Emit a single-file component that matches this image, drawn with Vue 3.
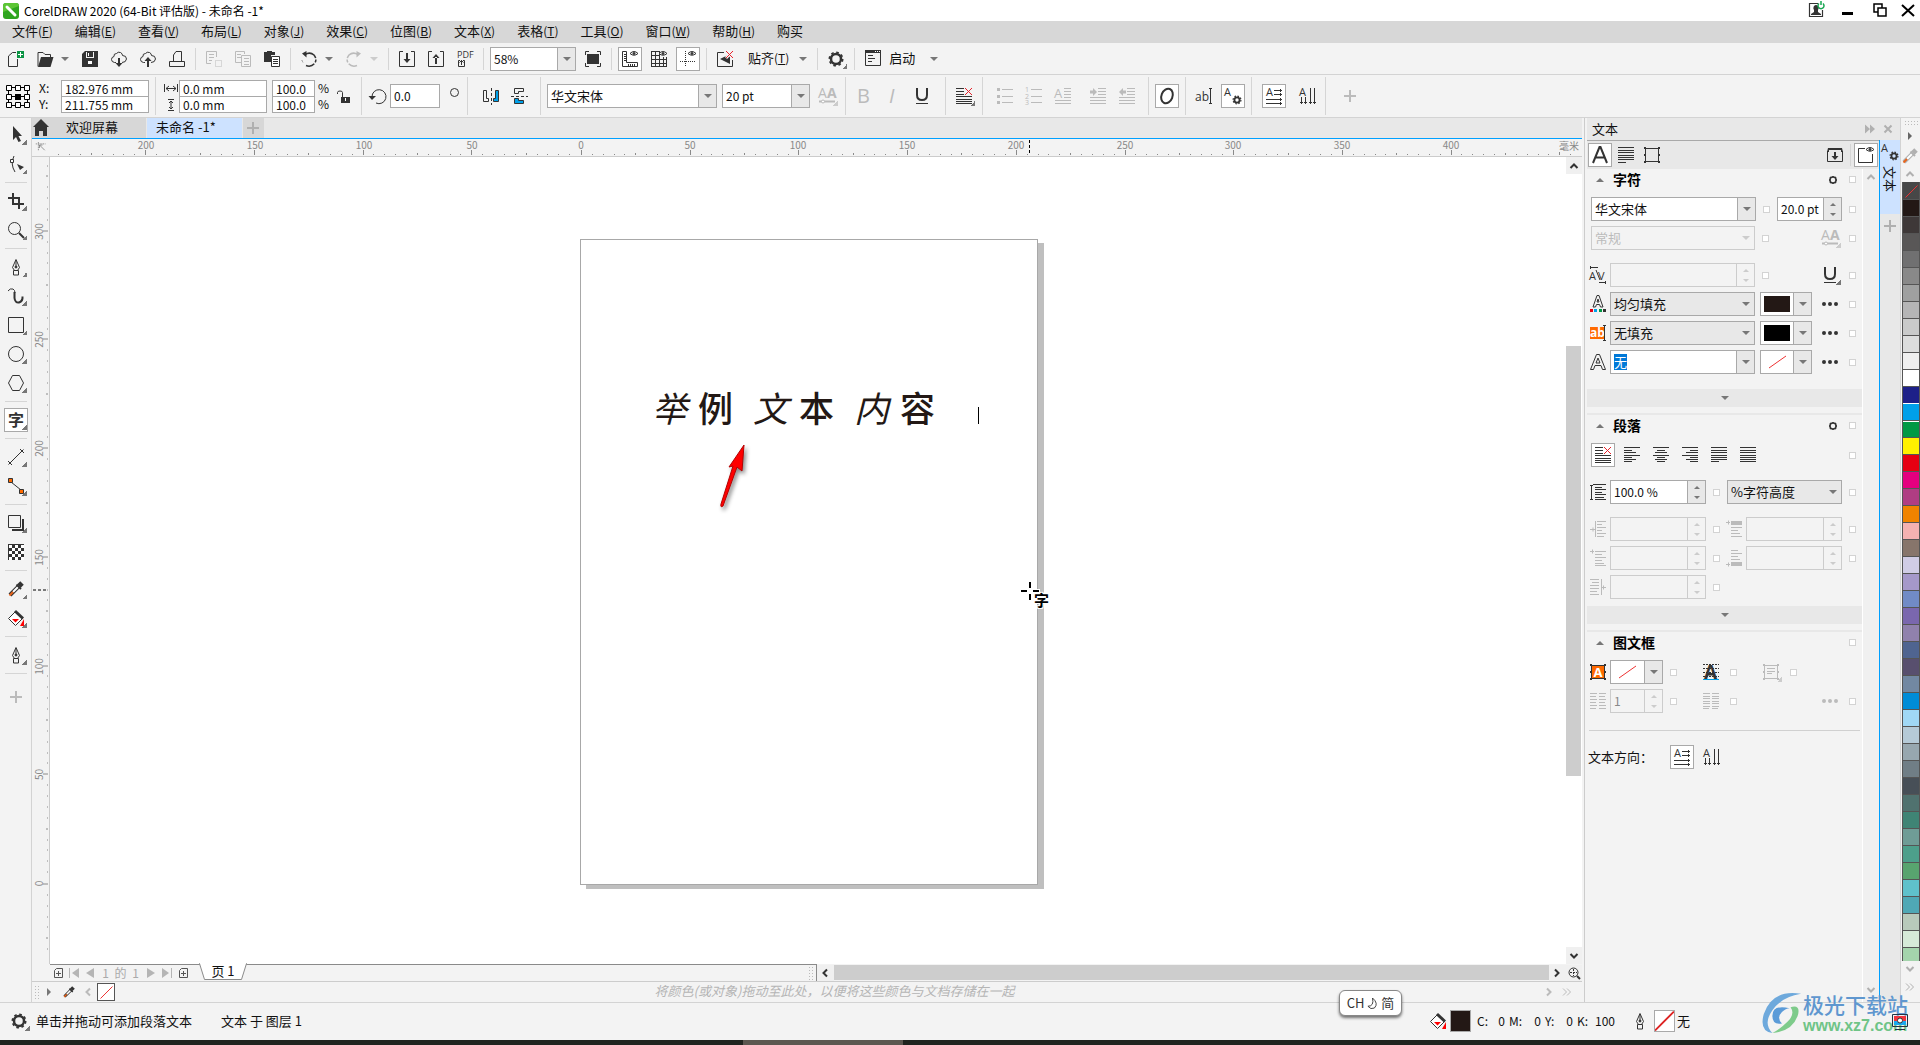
<script setup>
import { h } from 'vue'

const F = 'fill="currentColor" stroke="none"'
const lines = (rows) =>
  '<path d="' + rows.map(([a, b, y]) => `M${a} ${y}.5H${b}`).join('') + '"/>'
const redX = '<path d="M13 4l7 7M20 4l-7 7" stroke="#e8232b"/>'
const eye =
  '<path d="M12 6.500Q16 2.500 20 6.500Q16 10 12 6.500z" fill="#fff"/><circle cx="16" cy="6.500" r="1" fill="currentColor"/>'
const gearAt = (x, y, r, w) =>
  `<circle cx="${x}" cy="${y}" r="${r}" stroke-width="${w}"/><circle cx="${x}" cy="${y}" r="${r + w / 2 + 0.4}" stroke-width="${w * 0.7}" stroke-dasharray="${(r + w / 2 + 0.4) * 0.393} ${(r + w / 2 + 0.4) * 0.393}"/>`
const letter = (t, x, y, s, extra = '') =>
  `<text x="${x}" y="${y}" font-size="${s}" font-family="Open Sans, sans-serif" ${F} ${extra}>${t}</text>`

const nib =
  '<path d="M12 4.500L8.500 12.500L10.500 15.500H13.500L15.500 12.500zM12 5V12M9.500 15.500H14.500V20H9.500z"/><circle cx="12" cy="12" r="1" fill="currentColor"/>'
const cloud = '<path d="M9 15.500H7.500Q4.500 15 4.500 12.500T7 9.500Q6.500 6.500 9.500 6.500Q11 4.500 13.500 5.500Q15.500 6.500 15.500 8.500Q19.500 8.500 19.500 12Q19 15.500 15 15.500"/>'
const bucket =
  '<path d="M4.500 12.500L11.500 5.500L18.500 12.500L11.500 19.500z" fill="#fff"/><path d="M11 5L19 12.500" stroke-width="3"/><path d="M8 13H15L11.500 16.500z" fill="#f00" stroke="none"/><path d="M20 13V20H16z" fill="#f00" stroke="none"/>'
const dropper =
  '<path d="M6 18L14.500 9.500" stroke-width="4"/><path d="M9 15L14.500 9.500" stroke="#fff" stroke-width="2"/><path d="M5.500 18.500L9 15" stroke="#e8641b" stroke-width="2"/><path d="M12.500 7.500L17 12" stroke-width="2"/><path d="M15 9L18 6" stroke-width="5"/>'
const textH = letter('A', 4, 12, 11) + '<path d="M12 6.500H20M12 10.500H20M4 15.500H20M4 19.500H20M18.500 5V8M18.500 9V12M18.500 14V17M18.500 18V21"/>'
const textV = letter('A', 4, 12, 11) + '<path d="M15.500 4V20M19.500 4V20M6.500 13V20M10.500 13V20M5 18.500H8M9 18.500H12M14 18.500H17M18 18.500H21"/>'
const aGear = letter('A', 3, 12, 11) + gearAt(16, 16, 2.6, 1.8)
const frame =
  `<path d="M5.500 5.500H18.500V18.500H5.500z"/><path d="M4 4h2v2h-2zM18 4h2v2h-2zM4 18h2v2h-2zM18 18h2v2h-2zM4 11h2v2h-2zM18 11h2v2h-2z" ${F}/>`

const icons = {
  new: `<path d="M13.500 12V19.500H4.500V9L8.500 5.500H12"/><path d="M13 4h7v7h-7z" fill="#0b9444" stroke="none"/><path d="M16.500 5V10M14 7.500H19" stroke="#fff"/>`,
  open: `<path d="M5 19.500V5.500H10L12 7.500H17.500V10"/><path d="M5 20L8 10H20.500L17.500 20z" ${F}/>`,
  save: `<path d="M4 7L7 4H20V20H4z" ${F}/><path d="M8 5h8v6h-8z" fill="#f3f3f3" stroke="none"/><path d="M9 5h6v5h-6z" ${F}/><path d="M10 6h1v3h-1zM10 14h4v3h-4z" fill="#fff" stroke="none"/>`,
  cloudDown: cloud + `<path d="M12 11V17" stroke-width="2"/><path d="M8.500 16H15.500L12 20z" ${F}/>`,
  cloudUp: cloud + `<path d="M12 13V20" stroke-width="2"/><path d="M8.500 14H15.500L12 10z" ${F}/>`,
  print: '<path d="M8.500 14V8L11 4.500H16.500V14M8.500 14.500H4.500V19.500H19.500V14.500H16.500M8 14.500H17"/>',
  cut: '<path d="M14.500 10V4.500H4.500V16.500H9M7 7.500H12M7 10.500H12M7 13.500H10"/><path d="M13.500 13.500H19.500V19.500H13.500z" stroke-dasharray="1 1"/>',
  copy: '<path d="M10 15.500H4.500V4.500H13.500V7M6 7.500H10M6 10.500H10M10.500 8.500H19.500V19.500H10.500zM13 11.500H18M13 14.500H18M13 17.500H18"/>',
  paste: `<path d="M4 5H7V4H12V5H15V8H11V15H4z" ${F}/><path d="M11.500 9.500H19.500V19.500H11.500zM13 12.500H18M13 14.500H18M13 16.500H18" fill="#fff"/>`,
  undo: `<path d="M8 7.500Q13 4.500 17 8Q20.500 12.500 17.500 16.500Q14 20.500 9 18.500" stroke-width="1.500" stroke-dasharray="13 1.500 3 1.500"/><path d="M5 6.500L9.500 4V10.500z" ${F}/><path d="M5 13.500L6 15.500" stroke-dasharray="1 1"/>`,
  redo: `<path d="M16 7.500Q11 4.500 7 8Q3.500 12.500 6.500 16.500Q10 20.500 15 18.500" stroke-width="1.500" stroke-dasharray="13 1.500 3 1.500"/><path d="M19 6.500L14.500 4V10.500z" ${F}/>`,
  import: `<path d="M8 4.500H4.500V19.500H19.500V4.500H16"/><path d="M11 6h2v7h-2zM8.500 12H15.500L12 16z" ${F}/>`,
  export: `<path d="M8 4.500H4.500V19.500H19.500V4.500H16"/><path d="M11 10h2v7h-2zM8.500 11H15.500L12 7z" ${F}/>`,
  pdf: letter('PDF', 4, 11, 9) + '<path d="M7 13.500H5.500V19.500H11.500V13.500H10M8.500 13V18M6.500 15.500L8.500 13.500L10.500 15.500"/>',
  full: `<path d="M6 7h12v10H6z" ${F}/><path d="M4.500 8V4.500H8M16 4.500H19.500V8M19.500 16V19.500H16M8 19.500H4.500V16"/>`,
  rulers: '<path d="M4.500 4.500H8.500V15.500H19.500V19.500H4.500zM6 7.500H8M6 9.500H8M6 11.500H8M6 13.500H8M10.500 17V19M12.500 17V19M14.500 17V19M16.500 17V19"/>' + eye,
  grid: '<path d="M4 4.500H12M4 8.500H12M4 12.500H20M4 16.500H20M4 19.500H20M4.500 4V20M8.500 4V20M12.500 4V20M16.500 10V20M19.500 10V20"/>' + eye,
  guides: '<path d="M4 14.500H20M9.500 4V20" stroke-dasharray="1 1"/>' + eye,
  snap: `<path d="M11 5.500H4.500V19.500H19.500V13"/><path d="M7 12L17 7V17z" ${F}/><path d="M13 4l7 7M20 4l-7 7" stroke="#f3f3f3" stroke-width="3"/>` + redX,
  gear: gearAt(12, 12, 5, 2.5),
  launch: `<path d="M4.500 4.500H19.500V19.500H4.500zM7 9.500H12M7 12.500H14M7 15.500H11"/><path d="M4 4h16v3H4z" ${F}/><path d="M14 5.500h1M16 5.500h1M18 5.500h1" stroke="#fff"/>`,
  origin: '<path d="M2 3.500H22M2 12.500H22M2 21.500H22M2.500 3V22M12.500 3V6M12.500 19V22M21.500 3V22" stroke="#000"/><path d="M.5 1.500h5v5h-5zM9.500 1.500h5v5h-5zM18.500 1.500h5v5h-5zM.5 10.500h5v5h-5zM18.500 10.500h5v5h-5zM.5 18.500h5v5h-5zM9.500 18.500h5v5h-5zM18.500 18.500h5v5h-5z" fill="#fff" stroke="#000"/><path d="M9 10h6v6H9z" fill="#000" stroke="none"/>',
  lock: `<path d="M10 13h9v6h-9z" ${F}/><path d="M11.500 13V8.500Q11.500 7 9 7T6.500 8.500V10"/><path d="M14 14h1v3h-1z" fill="#fff" stroke="none"/>`,
  rotate: '<path d="M6 13A7 7 0 1 1 10 19"/><path d="M2.500 12H10L6 16z" fill="currentColor" stroke="none"/>',
  mirrorH: '<path d="M5.500 6.500V17.500H10.500V14.500H8.500V6.500z"/><path d="M17.500 6.500H20.500V17.500H15.500V14.500H17.500z" fill="#00a0e9"/><path d="M13.500 4V21" stroke-dasharray="3 2"/>',
  mirrorV: '<path d="M7.500 9.500V4.500H16.500V7.500H11.500V9.500z"/><path d="M7.500 14.500H11.500V16.500H16.500V19.500H7.500z" fill="#00a0e9"/><path d="M4 12.500H21" stroke-dasharray="3 2"/>',
  aa: letter('A', 3, 14, 14) + letter('A', 12, 14, 14, 'font-weight="700"') + '<path d="M4 17.500H20" stroke-width="2"/><circle cx="8" cy="17.500" r="1.500" fill="#fff"/>',
  bold: letter('B', 5, 19, 20),
  italic: letter('I', 8, 19, 20, 'font-style="italic" font-family="Liberation Serif, serif"'),
  underline: '<path d="M7 4V11Q7 16 12 16T17 11V4" stroke-width="2"/><path d="M6 19.500H18"/>',
  noAlign: lines([[4, 12, 4], [4, 12, 7], [4, 12, 10], [4, 20, 12], [4, 20, 15], [4, 20, 17], [4, 20, 19]]) + redX,
  left: lines([[4, 20, 4], [4, 12, 7], [4, 16, 9], [4, 20, 12], [4, 12, 14], [4, 16, 16], [4, 12, 18]]),
  center: lines([[4, 20, 4], [8, 16, 7], [6, 18, 9], [4, 20, 12], [8, 16, 14], [6, 18, 16], [8, 16, 18]]),
  right: lines([[4, 20, 4], [12, 20, 7], [8, 20, 9], [4, 20, 12], [12, 20, 14], [8, 20, 16], [12, 20, 18]]),
  justify: lines([[4, 20, 4], [4, 20, 7], [4, 20, 9], [4, 20, 12], [4, 20, 14], [4, 20, 16], [4, 12, 18]]),
  force: lines([[4, 20, 4], [4, 20, 7], [4, 20, 9], [4, 20, 12], [4, 20, 14], [4, 20, 16], [4, 20, 18]]),
  bullets: `<path d="M4 4h3v3H4zM4 11h3v3H4zM4 17h3v3H4z" ${F}/>` + lines([[9, 20, 5], [9, 20, 12], [9, 20, 18]]),
  numbers: letter('1', 3, 8, 7) + letter('2', 3, 15, 7) + letter('3', 3, 21, 7) + lines([[9, 20, 5], [9, 20, 12], [9, 20, 18]]),
  dropcap: letter('A', 3, 14, 13) + lines([[13, 20, 4], [13, 20, 7], [13, 20, 10], [13, 20, 13], [4, 20, 16], [4, 20, 19]]),
  indent: `<path d="M4 6.500H7V4L11 8L7 12V9.500H4z" ${F}/>` + lines([[12, 20, 4], [12, 20, 7], [12, 20, 10], [4, 20, 13], [4, 20, 16], [4, 20, 19]]),
  outdent: `<path d="M11 6.500H8V4L4 8L8 12V9.500H11z" ${F}/>` + lines([[12, 20, 4], [12, 20, 7], [12, 20, 10], [4, 20, 13], [4, 20, 16], [4, 20, 19]]),
  opentype: '<ellipse cx="12" cy="12" rx="5.500" ry="7.500" transform="rotate(22 12 12)" stroke-width="2"/>',
  editText: letter('ab', 3, 17, 12) + '<path d="M18.500 5V19M17 4.500H20M17 19.500H20"/>',
  aGear, textH, textV, frame,
  plus: '<path d="M12 6V18M6 12H18" stroke-width="2"/>',
  pick: `<path d="M9 3V17L12 14L14.500 19L17 18L14.500 13H18z" ${F}/>`,
  shape: `<path d="M10 4Q6 12 11 20"/><path d="M6.500 7.500h3v3h-3z" fill="#fff"/><path d="M13 12L20 15L16 18L17 20z" ${F}/>`,
  crop: '<path d="M9 4V15H20M4 9H15V20" stroke-width="2"/>',
  zoom: '<circle cx="10.500" cy="10.500" r="6"/><path d="M15 15L20 20" stroke-width="2"/>',
  pen: nib,
  brush: '<path d="M4 7Q6 4 9 5Q11 6 11 9"/><path d="M10.500 8V14Q11 19 15 18.500Q19 17 18.500 12.500" stroke-width="2"/>',
  rect: '<path d="M4.500 4.500H19.500V19.500H4.500z"/>',
  ellipse: '<circle cx="12" cy="12" r="7.500"/>',
  polygon: '<path d="M8.500 4.500H15.500L19.500 12L15.500 19.500H8.500L4.500 12z"/>',
  text: '<text x="4" y="18" font-size="16" font-weight="700" font-family="Noto Sans CJK SC, sans-serif" fill="currentColor" stroke="none">字</text>',
  dimension: '<path d="M5.500 18.500L18.500 5.500M4 16L8 20M16 4L20 8M4.500 19.500L6.500 17.500M17.500 6.500L19.500 4.500"/>',
  connector: '<path d="M7 8L17 16"/><path d="M4.500 4.500h4v4h-4zM15.500 15.500h4v4h-4z" fill="#ff6a00"/>',
  shadow: '<path d="M4.500 4.500H16.500V16.500H4.500z"/><path d="M19 8V19H8" stroke-width="2"/>',
  checker:
    `<path d="M4 4h16v16H4z" ${F}/><path fill="#fff" stroke="none" d="` +
    [0, 1, 2, 3, 4].map((r) => [0, 1, 2, 3, 4].filter((c) => (r + c) % 2 === 0).map((c) => `M${5 + c * 3} ${5 + r * 3}h3v3h-3z`).join('')).join('') + '"/>',
  dropper, bucket,
  tabA: '<path d="M5 20L11.500 4H12.500L19 20M7.500 14.500H16.500" stroke-width="2"/>',
  para: lines([[4, 20, 4], [4, 20, 7], [4, 20, 9], [4, 20, 12], [4, 20, 14], [4, 20, 16], [4, 12, 19]]),
  importPanel: `<path d="M4.500 8V18.500H19.500V8"/><path d="M5 5h14l1 4h-2V7H6v2H4z" ${F}/><path d="M11 9h2v4h2.500L12 17L8.500 13H11z" ${F}/>`,
  panelEye: '<path d="M11 5.500H4.500V19.500H18.500V11"/>' + eye,
  kern: letter('A', 3, 17, 11) + letter('V', 12, 17, 11) + '<path d="M10 7L14 17M5 4.500H12M4.500 3V6M13 19.500H19M19.500 18V21"/>',
  fillA:
    '<path d="M7 15L11 3.500H13L17 15H14.500L13.500 12.500H10.500L9.500 15zM11 10H13L12 7z"/><path d="M4 17h3v3H4z" fill="#e60012" stroke="none"/><path d="M8 17h3v3H8z" fill="#00a0e9" stroke="none"/><path d="M13 17h3v3h-3z" fill="#009944" stroke="none"/><path d="M17 17h3v3h-3z" fill="#333" stroke="none"/>',
  bgText: '<path d="M4 6h14v12H4z" fill="#ff6a00" stroke="none"/><text x="4" y="16" font-size="12" font-weight="700" font-family="Open Sans, sans-serif" fill="#fff" stroke="none">ab</text><path d="M18.500 5V19M17 4.500H20M17 19.500H20"/>',
  outlineA: '<path d="M4.500 19.500L10.500 4.500H13.500L19.500 19.500H16.500L15 15.500H9L7.500 19.500zM10 13H14L12 8z"/>',
  spacing: '<path d="M5.500 5V19M4 5.500H7M4 19.500H7"/>' + lines([[7, 20, 4], [9, 16, 7], [9, 20, 9], [9, 16, 12], [9, 20, 14], [9, 18, 17], [9, 20, 19]]),
  indL: '<path d="M4 12.500H9M7 10.500V14.500M9.500 4V20"/>' + lines([[11, 20, 4], [11, 16, 7], [11, 20, 10], [11, 16, 13], [11, 20, 16], [11, 18, 19]]),
  indF: '<path d="M4 5.500H8M6.500 3.500V7.500"/>' + lines([[9, 20, 5], [9, 16, 8], [9, 20, 11], [9, 16, 14], [9, 18, 17], [9, 20, 19]]),
  indR: '<path d="M15.500 4V20M15 12.500H20M17.500 10.500V14.500"/>' + lines([[4, 13, 4], [6, 13, 7], [4, 13, 10], [4, 13, 13], [4, 11, 16], [4, 13, 19]]),
  before: `<path d="M4 5.500H8M6.500 3.500V7.500"/><path d="M9 4h11v4H9z" ${F}/>` + lines([[9, 20, 10], [9, 16, 13], [9, 18, 16], [9, 20, 19]]),
  after: `<path d="M4 18.500H8M6.500 16.500V20.500"/><path d="M9 16h11v4H9z" ${F}/>` + lines([[9, 16, 4], [9, 20, 7], [9, 16, 10], [9, 18, 13]]),
  frameFill: '<path d="M5.500 5.500H18.500V18.500H5.500z" fill="#ff6a00"/>' + frame + '<text x="7.500" y="17" font-size="13" font-weight="700" font-family="Open Sans, sans-serif" fill="#fff" stroke="none">A</text>',
  baseline: '<path d="M4 4.500H20M4 8.500H20M4 12.500H20M4 16.500H20" stroke-dasharray="2 1"/>' + letter('A', 5, 19, 19, 'font-weight="700"') + '<path d="M4 19.500H20" stroke="#00a0e9"/>',
  frameText: frame + lines([[8, 16, 8], [8, 16, 11], [8, 13, 13]]),
  cols: lines([[4, 11, 4], [4, 10, 7], [4, 11, 10], [4, 10, 13], [4, 11, 16], [4, 10, 19], [13, 20, 4], [13, 19, 7], [13, 20, 10], [13, 19, 13], [13, 20, 16], [13, 20, 19]]),
  cols2: lines([[4, 11, 4], [4, 11, 7], [4, 11, 9], [4, 11, 12], [4, 11, 14], [4, 11, 17], [4, 10, 19], [13, 20, 4], [13, 20, 7], [13, 20, 9], [13, 20, 12], [13, 20, 14], [13, 20, 17], [13, 19, 19]]),
  dots: `<path d="M4 12a2 2 0 0 1 4 0a2 2 0 0 1-4 0zM10 12a2 2 0 0 1 4 0a2 2 0 0 1-4 0zM16 12a2 2 0 0 1 4 0a2 2 0 0 1-4 0z" ${F}/>`,
  home: `<path d="M12 3L20 11H18V20H14V15H10V20H6V11H4z" ${F}/>`,
  smallGear: '<circle cx="12" cy="12" r="3" stroke-width="1.500"/><path d="M12 8V9M12 15V16M8 12H9M15 12H16M9 9L10 10M15 9L14 10M9 15L10 14M15 15L14 14" stroke-width="1.500"/>',
  none: '<path d="M4 18L21 6" stroke="#e33"/>',
  noneBox: '<path d="M6.500 18.500L18.500 6.500" stroke="#e33"/>',
  up: '<path d="M8.500 14L12 10.500L15.500 14" stroke-width="2"/>',
  down: '<path d="M8.500 10L12 13.500L15.500 10" stroke-width="2"/>',
  lt: '<path d="M14 8.500L10.500 12L14 15.500" stroke-width="2"/>',
  gt: '<path d="M10 8.500L13.500 12L10 15.500" stroke-width="2"/>',
  gtgt: '<path d="M8 8.500L11.500 12L8 15.500M12 8.500L15.500 12L12 15.500"/>',
  ff: `<path d="M7 7.500L12 12L7 16.500zM12 7.500L17 12L12 16.500z" ${F}/>`,
  x: '<path d="M8.500 8.500L15.500 15.500M15.500 8.500L8.500 15.500" stroke-width="2"/>',
  play: `<path d="M10 8V16L14 12z" ${F}/>`,
  addPage: '<path d="M8.500 9.500L10.500 7.500H16.500V16.500H8.500zM12.500 10V15M10 12.500H15"/>',
  first: `<path d="M17 7V17L10 12z" ${F}/><path d="M7.500 7V17"/>`,
  prev: `<path d="M16 7V17L8 12z" ${F}/>`,
  next: `<path d="M8 7V17L16 12z" ${F}/>`,
  last: `<path d="M7 7V17L14 12z" ${F}/><path d="M16.500 7V17"/>`,
  pan: '<circle cx="11.500" cy="11.500" r="4.500"/><path d="M15 15L18 18" stroke-width="2"/><path d="M11.500 8V15M8 11.500H15" stroke-dasharray="2 1"/>',
  corner: '<path d="M5 6.500H18M8.500 4V16" stroke-dasharray="2 1"/><path d="M10 8L17 15M10 12V8H14"/>',
  user: `<path d="M14 5.500H5.500V18.500H18.500V12" stroke-width="1.200"/><path d="M12 7a2.500 3 0 0 1 2 5l0 2l3 2v1H7v-1l3-2v-2a2.500 3 0 0 1 2-5z" ${F}/><path d="M15 5.500A3 3 0 1 0 19 5.500M17 3V7" stroke="#17a651" stroke-width="1.500"/>`,
  min: '<path d="M6 15.500H17" stroke="#000" stroke-width="3"/>',
  restore: '<path d="M10 14H6V6H14V10M10 10H18V18H10z" stroke="#000" stroke-width="1.500"/>',
  close: '<path d="M6 7L18 18M18 7L6 18" stroke="#000" stroke-width="2"/>',
  proof: '<path d="M4.500 5.500H19.500V17.500H4.500z" stroke="#234"/><path d="M6 7h12v5H6z" fill="#f0343c" stroke="none"/><path d="M6 12h12v4H6z" fill="#1ba8ee" stroke="none"/><circle cx="12" cy="11.500" r="2.500" fill="#fff" stroke="#333"/><path d="M7 20.500H17" stroke="#234"/>',
}

const Ico = (p) =>
  h('svg', { class: 'ico', viewBox: '0 0 24 24', fill: 'none', stroke: 'currentColor', 'aria-hidden': 'true', innerHTML: icons[p.n] })
Ico.props = ['n']

const menus = [
  ['文件', 'F'], ['编辑', 'E'], ['查看', 'V'], ['布局', 'L'], ['对象', 'J'], ['效果', 'C'], ['位图', 'B'],
  ['文本', 'X'], ['表格', 'T'], ['工具', 'O'], ['窗口', 'W'], ['帮助', 'H'], ['购买', ''],
]

const bar1a = [
  { n: 'new', t: '新建' }, { n: 'open', t: '打开' }, { caret: 1 }, { n: 'save', t: '保存' }, { n: 'cloudDown', t: '从云中打开' },
  { n: 'cloudUp', t: '保存到云' }, { n: 'print', t: '打印' }, { sep: 1 }, { n: 'cut', t: '剪切', off: 1 }, { n: 'copy', t: '复制', off: 1 },
  { n: 'paste', t: '粘贴' }, { sep: 1 }, { n: 'undo', t: '撤消' }, { caret: 1 }, { n: 'redo', t: '重做', off: 1 }, { caret: 1, off: 1 },
  { sep: 1 }, { n: 'import', t: '导入' }, { n: 'export', t: '导出' }, { n: 'pdf', t: '发布为 PDF' }, { sep: 1 },
]
const bar1b = [
  { n: 'full', t: '全屏预览' }, { sep: 1 }, { n: 'rulers', t: '显示标尺', on: 1 }, { n: 'grid', t: '显示网格' },
  { n: 'guides', t: '显示辅助线', on: 1 }, { sep: 1 }, { n: 'snap', t: '关闭贴齐' },
]
const bar2 = [
  { n: 'aa', t: '字体变体', off: 1, tri: 1 }, { sep: 1 }, { n: 'bold', t: '粗体', off: 1 }, { n: 'italic', t: '斜体', off: 1 },
  { n: 'underline', t: '下划线' }, { sep: 1, cls: 'lead2' }, { n: 'noAlign', t: '文本对齐', tri: 1 }, { sep: 1 },
  { n: 'bullets', t: '项目符号', off: 1, cls: 'lead' }, { n: 'numbers', t: '编号', off: 1 }, { n: 'dropcap', t: '首字下沉', off: 1 },
  { n: 'indent', t: '增加缩进', off: 1, cls: 'lead2' }, { n: 'outdent', t: '减少缩进', off: 1 }, { sep: 1, cls: 'lead' },
  { n: 'opentype', t: '交互式 OpenType', on: 1 }, { sep: 1 }, { n: 'editText', t: '编辑文本' }, { n: 'aGear', t: '文本属性', on: 1 },
  { sep: 1 }, { n: 'textH', t: '水平方向', on: 1, cls: 'lead' }, { n: 'textV', t: '垂直方向', cls: 'lead' }, { sep: 1 },
  { n: 'plus', t: '快速自定义', off: 1, cls: 'lead2' },
]
const tools = [
  { n: 'pick', t: '选择', tri: 1 }, { n: 'shape', t: '形状', tri: 1 }, { sep: 1 }, { n: 'crop', t: '裁剪', tri: 1 }, { n: 'zoom', t: '缩放', tri: 1 },
  { sep: 1 }, { n: 'pen', t: '钢笔', tri: 1 }, { n: 'brush', t: '艺术笔', tri: 1 }, { n: 'rect', t: '矩形', tri: 1 }, { n: 'ellipse', t: '椭圆形', tri: 1 },
  { n: 'polygon', t: '多边形', tri: 1 }, { sep: 1 }, { n: 'text', t: '文本', tri: 1, on: 1 }, { sep: 1 }, { n: 'dimension', t: '平行度量', tri: 1 },
  { n: 'connector', t: '连接器', tri: 1 }, { sep: 1 }, { n: 'shadow', t: '阴影', tri: 1 }, { n: 'checker', t: '透明度' }, { sep: 1 },
  { n: 'dropper', t: '颜色滴管', tri: 1 }, { n: 'bucket', t: '交互式填充', tri: 1 }, { sep: 1 }, { n: 'pen', t: '轮廓笔', tri: 1 }, { sep: 1 },
  { n: 'plus', t: '快速自定义', off: 1, cls: 'last' },
]

const pitch = 10.87
const marks = (from, to) => {
  const out = []
  for (let i = from; i <= to; i++)
    out.push({ p: Math.round(i * pitch), len: i % 10 === 0 ? 5 : i % 5 === 0 ? 2 : 1, label: i % 10 === 0 ? Math.abs(i * 5) : null })
  return out
}
const hMarks = marks(-48, 91)
const vMarks = marks(-6, 66)

const colors = [
  '#231815', '#3e3838', '#595757', '#707071', '#898989', '#9fa0a0', '#b5b5b6', '#c9caca', '#dcdddd', '#efefef', '#ffffff',
  '#1d2088', '#00a0e9', '#009944', '#fff100', '#e60012', '#e4007f', '#b03d83', '#f08300', '#f4b1b1', '#87756b', '#d0cce5',
  '#a598c9', '#718bc6', '#7a67ae', '#9081ad', '#4f6490', '#584f6e', '#7288a2', '#008cd7', '#a0d8f5', '#b5cad7', '#97a7af',
  '#707e86', '#474f57', '#50726f', '#3f8475', '#6f9c96', '#4d9f8b', '#58a46f', '#5fc1cb', '#4fa8b5', '#b8cabb', '#d6ead8', '#a4d4ac',
]
</script>

<template>
  <div class="app">
    <header class="title">
      <svg class="logo" viewBox="0 0 16 16"><rect width="16" height="16" rx="3" fill="#2fa51f" /><path d="M0 9V3Q0 0 3 0H13Q16 0 16 3z" fill="#5cc535" /><path d="M4 4L12 12" stroke="#fff" stroke-width="3" stroke-linecap="round" /></svg>
      <h1>CorelDRAW 2020 (64-Bit 评估版) - 未命名 -1*</h1>
      <button class="win" aria-label="登录"><Ico n="user" /></button>
      <button class="win" aria-label="最小化"><Ico n="min" /></button>
      <button class="win" aria-label="还原"><Ico n="restore" /></button>
      <button class="win end" aria-label="关闭"><Ico n="close" /></button>
    </header>

    <nav class="menu">
      <a v-for="m in menus" :key="m[0]" href="#">{{ m[0] }}<span v-if="m[1]" class="mn">(<u>{{ m[1] }}</u>)</span></a>
    </nav>

    <div class="bar bar1">
      <template v-for="(b, i) in bar1a" :key="i">
        <i v-if="b.sep" class="sep"></i>
        <button v-else-if="b.caret" class="caret" :class="{ off: b.off }" aria-label="更多"></button>
        <button v-else class="btn" :class="{ off: b.off }" :aria-label="b.t"><Ico :n="b.n" /></button>
      </template>
      <label class="combo zoomlevel"><select aria-label="缩放级别"><option>58%</option></select><span class="drop"></span></label>
      <template v-for="(b, i) in bar1b" :key="i">
        <i v-if="b.sep" class="sep"></i>
        <button v-else class="btn" :class="{ on: b.on }" :aria-label="b.t"><Ico :n="b.n" /></button>
      </template>
      <button class="txt pad"><span>贴齐<span class="mn">(<u>T</u>)</span></span></button>
      <button class="caret" aria-label="贴齐选项"></button>
      <i class="sep"></i>
      <button class="btn tri" aria-label="选项"><Ico n="gear" /></button>
      <i class="sep"></i>
      <button class="txt"><Ico n="launch" /><span>启动</span></button>
      <button class="caret far" aria-label="应用程序启动器"></button>
    </div>

    <div class="bar bar2">
      <button class="btn origin" aria-label="对象原点"><Ico n="origin" /></button>
      <div class="stack tags"><label for="px">X:</label><label for="py">Y:</label></div>
      <div class="stack boxes wide"><input id="px" value="182.976 mm" /><input id="py" value="211.755 mm" /></div>
      <i class="sep"></i>
      <div class="stack arrows">
        <svg viewBox="0 0 14 14"><path d="M.5 3V11M13.500 3V11M2 7.500H12M5 5L2 7.500L5 10M9 5L12 7.500L9 10" /></svg>
        <svg viewBox="0 0 14 14"><path d="M4 1.500H10M4 12.500H10M7 3V11M5 5L7 3L9 5M5 9L7 11L9 9" /></svg>
      </div>
      <div class="stack boxes wide"><input aria-label="宽度" value="0.0 mm" /><input aria-label="高度" value="0.0 mm" /></div>
      <div class="stack boxes scale"><input id="sx" value="100.0" /><input id="sy" value="100.0" /></div>
      <div class="stack pct"><label for="sx">%</label><label for="sy">%</label></div>
      <button class="btn lock" aria-label="锁定比率"><Ico n="lock" /></button>
      <i class="sep"></i>
      <label class="rot"><Ico n="rotate" /><input aria-label="旋转角度" value="0.0" /><span class="deg"></span></label>
      <i class="sep"></i>
      <button class="btn lead" aria-label="水平镜像"><Ico n="mirrorH" /></button>
      <button class="btn" aria-label="垂直镜像"><Ico n="mirrorV" /></button>
      <i class="sep lead"></i>
      <label class="combo fontname"><select aria-label="字体列表"><option>华文宋体</option></select><span class="drop"></span></label>
      <label class="combo fontsize"><select aria-label="字体大小"><option>20 pt</option></select><span class="drop"></span></label>
      <template v-for="(b, i) in bar2" :key="i">
        <i v-if="b.sep" class="sep" :class="b.cls"></i>
        <button v-else class="btn" :class="[b.cls, { off: b.off, on: b.on, tri: b.tri }]" :aria-label="b.t"><Ico :n="b.n" /></button>
      </template>
    </div>

    <main class="work">
      <aside class="toolbox">
        <template v-for="(b, i) in tools" :key="i">
          <i v-if="b.sep" class="hsep"></i>
          <button v-else class="btn" :class="[b.cls, { off: b.off, on: b.on, tri: b.tri }]" :aria-label="b.t"><Ico :n="b.n" /></button>
        </template>
      </aside>

      <section class="doc">
        <div class="tabs">
          <button class="home" aria-label="主页"><Ico n="home" /></button>
          <button class="tab">欢迎屏幕</button>
          <button class="tab active">未命名 -1*</button>
          <button class="addtab" aria-label="新建文档"><Ico n="plus" /></button>
        </div>
        <div class="hruler">
          <Ico n="corner" class="cornericon" />
          <svg class="hsvg">
            <svg x="50%" overflow="visible">
              <g transform="translate(-235 0)">
                <path v-for="m in hMarks" :key="m.p" :d="`M${m.p}.5 ${16 - m.len}V16`" />
                <text v-for="m in hMarks.filter((k) => k.label !== null && k.p < 900)" :key="m.p" :x="m.p" y="10">{{ m.label }}</text>
                <path class="pos" d="M448.500 1V16" />
              </g>
            </svg>
          </svg>
          <span class="unit">毫米</span>
        </div>
        <div class="viewrow">
          <svg class="vsvg">
            <svg y="50%" overflow="visible">
              <g transform="translate(0 323)">
                <path v-for="m in vMarks" :key="m.p" :d="`M${16 - m.len} ${-m.p}.5H16`" />
                <text v-for="m in vMarks.filter((k) => k.label !== null)" :key="m.p" :transform="`translate(11 ${-m.p}) rotate(-90)`">{{ m.label }}</text>
                <path class="pos" d="M1 -293.500H16" />
              </g>
            </svg>
          </svg>
          <div class="canvas">
            <div class="page">
              <p class="sample"><span class="pair"><em>举</em><b>例</b></span><span class="pair"><em>文</em><b>本</b></span><span class="pair"><em>内</em><b>容</b></span><i class="ins"></i></p>
              <svg class="arrow" viewBox="0 0 40 76"><path d="M29 5L27 31L22 27L8 66Q5 68 6 64L18 26L14 27z" fill="#f00" stroke="#b40000" /></svg>
              <div class="cursor">
                <svg viewBox="0 0 20 20"><path d="M0 10H8M12 10H20M10 0V8M10 12V20" stroke="#fff" stroke-width="4" /><path d="M1 10H7M13 10H19M10 1V7M10 13V19" stroke="#000" stroke-width="2" /></svg>
                <span>字</span>
              </div>
            </div>
          </div>
          <div class="vscroll">
            <button aria-label="向上滚动"><Ico n="up" /></button>
            <div class="vtrack"><div class="vthumb"></div></div>
            <button aria-label="向下滚动"><Ico n="down" /></button>
          </div>
        </div>
        <div class="pagerow">
          <div class="pages">
            <button aria-label="前面添加页"><Ico n="addPage" class="dark" /></button>
            <button aria-label="第一页"><Ico n="first" /></button>
            <button aria-label="前一页"><Ico n="prev" /></button>
            <span class="count">1</span><span class="count">的</span><span class="count">1</span>
            <button aria-label="后一页"><Ico n="next" /></button>
            <button aria-label="最后一页"><Ico n="last" /></button>
            <button aria-label="后面添加页"><Ico n="addPage" class="dark" /></button>
            <button class="pagetab"><svg viewBox="0 0 48 18"><path d="M0 .5H.5L5.500 16.500H42.500L47.500 .5H48" fill="#fff" stroke="#8a8a8a" /><path d="M1 0H47" stroke="#fff" /></svg><span>页 1</span></button>
            <i class="grip"></i>
          </div>
          <button class="sb" aria-label="向左滚动"><Ico n="lt" /></button>
          <div class="hthumb"></div>
          <button class="sb" aria-label="向右滚动"><Ico n="gt" /></button>
          <button class="sb" aria-label="导航器"><Ico n="pan" /></button>
        </div>
        <div class="docpal">
          <i class="grip"></i>
          <button class="mini" aria-label="选项"><Ico n="play" /></button>
          <button class="mini drop16" aria-label="滴管"><Ico n="dropper" /></button>
          <button class="mini pale" aria-label="向左"><Ico n="lt" /></button>
          <button class="nocolor" aria-label="无颜色"><Ico n="noneBox" /></button>
          <span class="hint">将颜色(或对象)拖动至此处，以便将这些颜色与文档存储在一起</span>
          <button class="mini pale" aria-label="向右"><Ico n="gt" /></button>
          <button class="mini pale" aria-label="展开"><Ico n="gtgt" /></button>
        </div>
      </section>

      <section class="docker">
        <div class="dtitle">
          <h2>文本</h2>
          <button class="mini" aria-label="折叠"><Ico n="ff" /></button>
          <button class="mini" aria-label="关闭"><Ico n="x" /></button>
        </div>
        <div class="dmain">
          <div class="dpanel">
            <div class="dtabs">
              <button class="btn on" aria-label="字符"><Ico n="tabA" /></button>
              <button class="btn" aria-label="段落"><Ico n="para" /></button>
              <button class="btn" aria-label="图文框"><Ico n="frame" /></button>
              <button class="btn push" aria-label="样式"><Ico n="importPanel" /></button>
              <i class="sep"></i>
              <button class="btn on" aria-label="显示"><Ico n="panelEye" /></button>
            </div>
            <div class="dscroll">
              <div class="dbody">
                <div class="head"><i class="fold"></i><h3>字符</h3><Ico n="smallGear" class="push" /><i class="sq"></i></div>
                <div class="row in">
                  <label class="combo grow"><select aria-label="字体"><option>华文宋体</option></select><span class="drop"></span></label><i class="sq"></i>
                  <div class="spin w65"><input aria-label="大小" value="20.0 pt" /><span class="ud"></span></div><i class="sq"></i>
                </div>
                <div class="row in">
                  <label class="combo plain dis w164"><select aria-label="字体样式" disabled><option>常规</option></select><span class="drop"></span></label><i class="sq"></i>
                  <button class="btn off tri push" aria-label="变体"><Ico n="aa" /></button><i class="sq"></i>
                </div>
                <div class="row gap8">
                  <Ico n="kern" class="lab" /><div class="spin dis w145"><input aria-label="字距调整" disabled /><span class="ud"></span></div><i class="sq"></i>
                  <button class="btn tri push" aria-label="下划线"><Ico n="underline" /></button><i class="sq"></i>
                </div>
                <div class="row">
                  <Ico n="fillA" class="lab" /><label class="combo plain gray w145"><select aria-label="填充类型"><option>均匀填充</option></select><span class="drop"></span></label>
                  <button class="swatch" aria-label="文本颜色"><span class="chip brown"></span><span class="drop"></span></button><button class="btn push" aria-label="填充设置"><Ico n="dots" /></button><i class="sq"></i>
                </div>
                <div class="row">
                  <Ico n="bgText" class="lab" /><label class="combo plain gray w145"><select aria-label="背景填充类型"><option>无填充</option></select><span class="drop"></span></label>
                  <button class="swatch" aria-label="文本背景色"><span class="chip black"></span><span class="drop"></span></button><button class="btn push" aria-label="背景设置"><Ico n="dots" /></button><i class="sq"></i>
                </div>
                <div class="row">
                  <Ico n="outlineA" class="lab" /><label class="combo w145"><span class="sel">无</span><select class="ghost" aria-label="轮廓宽度"><option></option></select><span class="drop"></span></label>
                  <button class="swatch" aria-label="轮廓颜色"><span class="chip"><Ico n="none" /></span><span class="drop"></span></button><button class="btn push" aria-label="轮廓设置"><Ico n="dots" /></button><i class="sq"></i>
                </div>
                <button class="more" aria-label="更多字符选项"></button>

                <div class="head"><i class="fold"></i><h3>段落</h3><Ico n="smallGear" class="push" /><i class="sq"></i></div>
                <div class="row in aligns">
                  <button class="btn on" aria-label="无对齐"><Ico n="noAlign" /></button><button class="btn" aria-label="左对齐"><Ico n="left" /></button>
                  <button class="btn" aria-label="居中"><Ico n="center" /></button><button class="btn" aria-label="右对齐"><Ico n="right" /></button>
                  <button class="btn" aria-label="两端对齐"><Ico n="justify" /></button><button class="btn" aria-label="强制两端对齐"><Ico n="force" /></button>
                  <i class="sq push"></i>
                </div>
                <div class="row gap8">
                  <Ico n="spacing" class="lab" /><div class="spin w96"><input aria-label="行间距" value="100.0 %" /><span class="ud"></span></div><i class="sq"></i>
                  <label class="combo plain gray grow"><select aria-label="间距单位"><option>%字符高度</option></select><span class="drop"></span></label><i class="sq"></i>
                </div>
                <div class="row gap8">
                  <Ico n="indL" class="lab pale" /><div class="spin dis w96"><input aria-label="左缩进" disabled /><span class="ud"></span></div><i class="sq"></i>
                  <Ico n="before" class="lab2 pale" /><div class="spin dis grow"><input aria-label="段前间距" disabled /><span class="ud"></span></div><i class="sq"></i>
                </div>
                <div class="row">
                  <Ico n="indF" class="lab pale" /><div class="spin dis w96"><input aria-label="首行缩进" disabled /><span class="ud"></span></div><i class="sq"></i>
                  <Ico n="after" class="lab2 pale" /><div class="spin dis grow"><input aria-label="段后间距" disabled /><span class="ud"></span></div><i class="sq"></i>
                </div>
                <div class="row final">
                  <Ico n="indR" class="lab pale" /><div class="spin dis w96"><input aria-label="右缩进" disabled /><span class="ud"></span></div><i class="sq"></i>
                </div>
                <button class="more" aria-label="更多段落选项"></button>

                <div class="head"><i class="fold"></i><h3>图文框</h3><i class="sq push"></i></div>
                <div class="row">
                  <Ico n="frameFill" class="lab" /><button class="swatch first" aria-label="图文框填充"><span class="chip"><Ico n="none" /></span><span class="drop"></span></button><i class="sq"></i>
                  <button class="btn gapl" aria-label="基线网格"><Ico n="baseline" /></button><i class="sq"></i>
                  <button class="btn gapl off tri" aria-label="垂直对齐"><Ico n="frameText" /></button><i class="sq"></i>
                </div>
                <div class="row">
                  <Ico n="cols" class="lab pale" /><div class="spin dis w53"><input class="num" aria-label="栏数" value="1" disabled /><span class="ud"></span></div><i class="sq"></i>
                  <button class="btn gapl off" aria-label="栏宽相等"><Ico n="cols2" /></button><i class="sq"></i>
                  <button class="btn off push" aria-label="栏设置"><Ico n="dots" /></button><i class="sq"></i>
                </div>
                <hr />
                <div class="row dir"><span>文本方向：</span><button class="btn on" aria-label="水平"><Ico n="textH" /></button><button class="btn" aria-label="垂直"><Ico n="textV" /></button></div>
              </div>
              <div class="dbar"><Ico n="up" /><Ico n="down" /></div>
            </div>
          </div>
          <div class="dstrip">
            <button class="vtab"><Ico n="aGear" /><span>文本</span></button>
            <button class="vadd" aria-label="添加泊坞窗"><Ico n="plus" /></button>
          </div>
        </div>
      </section>

      <aside class="palette">
        <i class="gripx"></i>
        <button class="pbtn mid" aria-label="选项"><Ico n="play" /></button>
        <button class="pbtn" aria-label="滴管"><Ico n="dropper" /></button>
        <button class="pbtn slim" aria-label="向上"><Ico n="up" /></button>
        <div class="colors">
          <button class="color empty" aria-label="无填充"><Ico n="noneBox" /></button>
          <button v-for="c in colors" :key="c" class="color" :class="{ cur: c === '#00a0e9' }" :style="{ background: c }" :aria-label="c"></button>
        </div>
        <button class="pbtn slim" aria-label="向下"><Ico n="down" /></button>
        <button class="pbtn" aria-label="展开"><Ico n="gtgt" /></button>
      </aside>
    </main>

    <footer class="status">
      <button class="btn tri" aria-label="状态栏选项"><Ico n="gear" /></button>
      <span class="msg">单击并拖动可添加段落文本</span>
      <span>文本 于 图层 1</span>
      <div class="fill">
        <Ico n="bucket" /><span class="box brown"></span>
        <span class="cmyk"><span>C:</span><span>0</span><span>M:</span><span>0</span><span>Y:</span><span>0</span><span>K:</span><span>100</span></span>
        <Ico n="pen" /><span class="box"><svg viewBox="0 0 20 20"><path d="M0 20L20 0" stroke="#d22" stroke-width="2" /></svg></span><span>无</span>
      </div>
      <button class="ime">CH <svg viewBox="0 0 12 14"><path d="M6 1Q13 7 8 12Q4 14 1 10Q8 10 6 1z" /></svg> 简</button>
      <div class="mark">
        <svg viewBox="0 0 46 46"><path d="M44 3Q14 -2 5 24Q0 42 14 44Q4 34 14 20Q24 6 44 3z" fill="#6ea9dc" /><path d="M14 44Q36 42 41 24Q43 14 33 17Q38 24 30 32Q22 40 14 44z" fill="#7ecb8b" /><path d="M32 18Q14 14 14 26Q14 36 24 34Q18 28 24 22Q28 18 32 18z" fill="#5b9bd8" /></svg>
        <div><strong>极光下载站</strong><span>www.xz7.com</span></div>
        <Ico n="proof" class="proof" />
      </div>
    </footer>
    <div class="desk"><i></i></div>
  </div>
</template>

<style>
html, body { margin: 0; background: #f3f3f3; }
</style>

<style scoped>
* { box-sizing: border-box; }
.app { min-height: 100vh; display: flex; flex-direction: column; background: #f3f3f3; color: #111; font: 13px/16px "Noto Sans CJK SC", sans-serif; overflow: hidden; }
button, input, select { font: inherit; color: inherit; margin: 0; padding: 0; border: 0; background: none; border-radius: 0; outline: 0; min-width: 0; }
button { display: block; flex: none; }
select { appearance: none; opacity: 1; }
h1, h2, h3, p { margin: 0; font: inherit; }
.ico { display: block; width: 24px; height: 24px; flex: none; color: #333; overflow: visible; }
.mn { font-size: 12px; }
.push { margin-left: auto; }
.lead { margin-left: 4px; }
.lead2 { margin-left: 6px; }

.title { display: flex; align-items: center; height: 21px; background: #fff; padding-left: 3px; }
.logo { width: 16px; height: 16px; margin-right: 5px; }
.title h1 { flex: 1; font-size: 12px; color: #000; }
.win { width: 24px; height: 21px; margin-left: 8px; }
.win.end { margin-left: 4px; }
.win .ico { margin-top: -2px; }

.menu { display: flex; height: 22px; align-items: center; gap: 22px; padding: 0 0 2px 12px; background: #d7d7d7; }
.menu a { color: #111; text-decoration: none; white-space: nowrap; }

.bar { display: flex; align-items: center; gap: 5px; border-bottom: 1px solid #d3d3d3; padding-left: 4px; }
.bar1 { height: 32px; }
.bar2 { height: 43px; }
.sep { flex: none; width: 1px; height: 22px; margin-right: 1px; background: #d5d5d5; }
.sep:not(.lead):not(.lead2) { margin-left: 1px; }
.bar2 .sep { height: 38px; }
.btn { position: relative; width: 24px; height: 24px; }
.on { border: 1px solid #a9a9a9; background: #fff; }
.on .ico { margin: -1px; }
.off .ico { color: #bbb; }
.tri::after { content: ""; position: absolute; right: 1px; bottom: 2px; width: 5px; height: 5px; background: linear-gradient(135deg, transparent 50%, #777 50%); }
.off.tri::after { background: linear-gradient(135deg, transparent 50%, #ccc 50%); }
.on.tri::after { right: 0; bottom: 1px; }
.caret { width: 12px; height: 24px; margin: 0 2px 0 -3px; display: flex; align-items: center; justify-content: center; }
.caret.far { margin-left: 8px; }
.caret::before, .drop::before, .more::before { content: ""; border: 4px solid transparent; border-top-color: #777; border-bottom: 0; }
.caret.off::before, .dis .drop::before { border-top-color: #ccc; }
.txt { display: flex; align-items: center; height: 24px; white-space: nowrap; padding-bottom: 1px; }
.txt .ico { margin-right: 4px; }
.txt.pad { padding: 0 6px 1px; }

.combo, .spin, .swatch { display: flex; flex: none; height: 24px; border: 1px solid #a9a9a9; background: #fff; position: relative; }
.combo select { flex: 1; padding-left: 3px; line-height: 22px; }
.drop { flex: none; width: 18px; border-left: 1px solid #a9a9a9; background: #e8e8e8; display: flex; align-items: center; justify-content: center; }
.plain .drop { border: 0; background: none; width: 16px; }
.combo.gray { background: #e8e8e8; }
.combo.dis, .spin.dis { border-color: #ccc; background: #f3f3f3; }
.dis select, .dis input { color: #bbb; }
.dis .num { color: #888; }
.zoomlevel { width: 86px; font-size: 12px; }
.fontname { width: 170px; }
.fontsize { width: 88px; font-size: 12px; }

.stack { display: flex; flex-direction: column; font-size: 12px; }
.origin { margin: 0 3px 0 2px; }
.tags { margin: 0 3px 0 1px; width: 14px; }
.boxes input { height: 17px; width: 100%; border: 1px solid #a9a9a9; background: #fff; padding-left: 3px; line-height: 15px; }
.boxes input + input { margin-top: -1px; }
.wide { width: 88px; }
.scale { width: 43px; }
.pct { margin-left: -2px; width: 12px; }
.lock { margin-left: -4px; }
.arrows { width: 14px; gap: 3px; margin: 0 -4px 0 2px; }
.arrows svg { width: 14px; height: 14px; fill: none; stroke: #333; }
.rot { display: flex; align-items: center; margin-left: -2px; }
.rot input { width: 50px; height: 24px; border: 1px solid #a9a9a9; background: #fff; padding: 0 0 2px 3px; font-size: 12px; }
.deg { width: 9px; height: 9px; border: 1px solid #333; border-radius: 5px; margin: 0 2px 7px 10px; }

.work { flex: 1; display: flex; min-height: 0; }
.toolbox { flex: none; width: 32px; border-right: 1px solid #d3d3d3; display: flex; flex-direction: column; gap: 5px; padding: 5px 0 0 4px; }
.hsep { flex: none; height: 1px; width: 22px; margin: 1px; background: #d5d5d5; }
.last { margin-top: 5px; }

.doc { flex: 1; min-width: 0; display: flex; flex-direction: column; }
.tabs { display: flex; height: 21px; background: #e8e8e8; border-bottom: 1px solid #00a0ff; }
.home { width: 20px; height: 20px; background: #d7d7d7; }
.home .ico { margin: -2px 0 0 -3px; }
.tab { height: 20px; background: #d7d7d7; padding: 0 28px 2px 14px; line-height: 16px; }
.tab.active { background: #cde2ff; padding: 0 26px 2px 9px; border-left: 1px solid #e8e8e8; }
.addtab { width: 22px; height: 20px; background: #d7d7d7; border-left: 1px solid #e8e8e8; }
.addtab .ico { color: #b0b0b0; margin: -2px 0 0 -2px; }
.hruler { position: relative; display: flex; height: 18px; border-bottom: 1px solid #ccc; }
.cornericon { width: 18px; height: 18px; color: #777; }
.hsvg { flex: 1; height: 17px; min-width: 0; overflow: visible; }
.hsvg path, .vsvg path { stroke: #8a8a8a; fill: none; }
.hsvg .pos, .vsvg .pos { stroke: #000; stroke-dasharray: 3 2; }
.hsvg text, .vsvg text { font: 10px "Noto Sans CJK SC", sans-serif; fill: #888; text-anchor: middle; }
.unit { position: absolute; right: 3px; top: 1px; font-size: 10px; line-height: 12px; color: #888; background: #f3f3f3; }
.viewrow { flex: 1; display: flex; min-height: 0; }
.vsvg { flex: none; width: 18px; height: 100%; border-right: 1px solid #ccc; overflow: visible; }
.canvas { flex: 1; min-width: 0; background: #fff; display: flex; align-items: center; justify-content: center; padding: 2px 0 0 2px; overflow: hidden; }
.page { position: relative; flex: none; width: 458px; height: 646px; border: 1px solid #a8a8a8; background: #fff; box-shadow: 6px 4px 0 #bfbfbf; }
.sample { display: flex; align-items: center; gap: 20px; padding: 142px 0 0 71px; font-size: 35px; line-height: 50px; color: #231815; }
.pair { display: flex; gap: 11px; }
.pair em { font-style: italic; }
.pair b { font-weight: 500; }
.ins { width: 1px; height: 17px; background: #000; margin: 18px 0 0 23px; }
.arrow { position: absolute; left: 134px; top: 200px; width: 40px; height: 76px; filter: drop-shadow(2px 3px 2px #0007); }
.cursor { position: absolute; left: 439px; top: 341px; }
.cursor svg { display: block; width: 20px; height: 20px; fill: none; }
.cursor span { position: absolute; left: 14px; top: 10px; font: 700 15px/18px "Noto Sans CJK SC", sans-serif; color: #000; text-shadow: 1px 1px #fff, -1px -1px #fff, 1px -1px #fff, -1px 1px #fff; }
.vscroll { flex: none; width: 16px; background: #fff; display: flex; flex-direction: column; }
.vscroll button { height: 17px; width: 16px; background: #f0f0f0; }
.vscroll .ico { margin: -4px; }
.vtrack { flex: 1; display: flex; flex-direction: column; width: 15px; }
.vtrack::before { content: ""; flex: 172; }
.vtrack::after { content: ""; flex: 171; }
.vthumb { flex: 430; background: #cdcdcd; }
.pagerow { display: flex; height: 18px; border-bottom: 1px solid #ccc; padding-left: 18px; }
.pages { flex: none; width: 767px; display: flex; align-items: center; border: 1px solid #8a8a8a; border-width: 1px 1px 0 0; color: #aaa; }
.pages button { width: 16px; height: 16px; display: flex; align-items: center; justify-content: center; }
.pages .ico { color: #b5b5b5; }
.pages .ico.dark { color: #555; }
.count { width: 15px; text-align: center; font-size: 12px; line-height: 14px; padding-bottom: 1px; }
.pages .pagetab { position: relative; width: 48px; height: 18px; margin: -2px 0 0 8px; color: #111; }
.pagetab svg { position: absolute; left: 0; top: 0; width: 48px; height: 18px; }
.pagetab span { position: relative; line-height: 14px; padding-bottom: 2px; }
.grip { width: 6px; height: 14px; background: radial-gradient(#bbb 1px, transparent 1px) 0 0 / 3px 3px; }
.pages .grip { margin-left: auto; margin-right: 2px; }
.sb { width: 17px; height: 16px; background: #f0f0f0; margin-top: 1px; }
.sb .ico { margin: -4px; }
.sb:last-child { width: 16px; }
.hthumb { flex: 1; height: 15px; margin-top: 1px; background: #cdcdcd; }
.docpal { display: flex; align-items: center; height: 20px; padding: 0 6px 0 2px; }
.mini { width: 20px; height: 20px; display: flex; align-items: center; justify-content: center; }
.mini .ico { color: #777; }
.pale .ico, .ico.pale { color: #bbb; }
.docpal .mini:nth-child(2) { margin-left: -1px; }
.drop16 .ico { width: 18px; height: 18px; color: #333; }
.docpal .pale { width: 18px; }
.nocolor { width: 18px; height: 18px; border: 1px solid #555; background: #fff; overflow: hidden; }
.nocolor .ico { margin: -4px; }
.hint { flex: 1; text-align: center; font-style: italic; color: #b5b5b5; padding: 0 0 2px 14px; }

.docker { flex: none; width: 316px; border-left: 1px solid #ccc; padding-left: 2px; margin-left: 2px; display: flex; flex-direction: column; }
.dtitle { display: flex; align-items: center; height: 22px; background: #e8e8e8; padding: 0 3px 1px 5px; }
.dtitle h2 { flex: 1; }
.dtitle .mini { width: 18px; }
.dtitle .ico { color: #b0b0b0; }
.dmain { flex: 1; display: flex; }
.dpanel { flex: 1; display: flex; flex-direction: column; border-top: 1px solid #a9a9a9; }
.dtabs { display: flex; align-items: center; gap: 2px; height: 28px; padding: 0 1px 1px; background: #e8e8e8; }
.dtabs .sep:not(.lead) { margin: 0 1px; }
.dscroll { flex: 1; display: flex; }
.dbody { flex: 1; min-width: 0; display: flex; flex-direction: column; gap: 5px; }
.dbar { flex: none; width: 17px; border-left: 1px solid #fff; background: #f0f0f0; display: flex; flex-direction: column; justify-content: space-between; }
.dbar .ico { margin-left: -4px; margin-top: -4px; color: #b0b0b0; }
.head { display: flex; align-items: center; height: 23px; padding: 0 6px 2px 0; }
.head h3 { font-weight: 700; font-size: 14px; margin: -1px 0 0 9px; color: #000; }
.head .push + .sq { margin-left: 4px; }
.fold { margin-left: 9px; border: 4px solid transparent; border-bottom-color: #777; border-top: 0; }
.sq { flex: none; width: 7px; height: 7px; border: 1px solid #d3d3d3; background: #fff; }
.row { display: flex; align-items: center; gap: 7px; height: 24px; padding-right: 6px; }
.in { padding-left: 4px; }
.gap8 { margin-top: 8px; }
.lab { margin: 0 -7px 0 -1px; }
.lab2 { margin: 0 -7px 0 -5px; }
.grow { flex: 1; }
.w164 { width: 164px; } .w145 { width: 145px; } .w96 { width: 96px; } .w65 { width: 65px; } .w53 { width: 53px; }
.spin input { flex: 1; width: 0; padding: 0 0 1px 3px; font-size: 12px; }
.ud { flex: none; width: 18px; border-left: 1px solid #a9a9a9; background: #e8e8e8; display: flex; flex-direction: column; align-items: center; justify-content: space-between; padding: 5px 0 4px; }
.ud::before { content: ""; border: 3px solid transparent; border-bottom-color: #777; border-top: 0; }
.ud::after { content: ""; border: 3px solid transparent; border-top-color: #777; border-bottom: 0; }
.dis .ud { border-color: #ccc; background: none; }
.dis .ud::before { border-bottom-color: #ccc; }
.dis .ud::after { border-top-color: #ccc; }
.swatch { width: 52px; margin-left: -2px; margin-right: -2px; }
.swatch.first { width: 53px; margin: 0; }
.chip { flex: 1; margin: 3px; overflow: hidden; }
.chip .ico { margin: -4px 0 0 1px; }
.brown { background: #231815; }
.black { background: #000; }
.sel { position: absolute; left: 3px; top: 3px; background: #0078d7; color: #fff; line-height: 16px; }
.ghost { width: 0; }
.more { display: flex; align-items: center; justify-content: center; height: 18px; margin: 10px 0 0; background: #e8e8e8; }
.final + .more { margin-top: 2px; }
.more + .head { border-top: 2px solid #e8e8e8; height: 25px; margin-top: 1px; }
.aligns { gap: 5px; }
.gapl { margin-left: 15px; }
hr { width: calc(100% - 4px); height: 1px; border: 0; background: #d0d0d0; margin: 12px 2px 9px; }
.dir { gap: 5px; padding-left: 1px; }
.dir span { width: 77px; }
.dstrip { flex: none; width: 21px; border-left: 1px solid #00a0ff; background: #e8e8e8; }
.vtab { width: 20px; height: 74px; background: #cde2ff; padding: 0; display: flex; flex-direction: column; align-items: center; gap: 2px; }
.vtab span { writing-mode: vertical-rl; text-orientation: sideways; line-height: 20px; }
.vadd .ico { margin-left: -2px; color: #b0b0b0; }

.palette { flex: none; width: 20px; border-left: 1px solid #d3d3d3; display: flex; flex-direction: column; align-items: center; padding: 2px 0 5px; }
.gripx { flex: none; width: 14px; height: 6px; background: radial-gradient(#bbb 1px, transparent 1px) 0 0 / 3px 3px; }
.pbtn { width: 19px; height: 20px; }
.pbtn .ico { margin: -2px -3px; color: #b0b0b0; }
.mid .ico { color: #666; }
.slim { height: 16px; }
.slim .ico { margin-top: -4px; }
.colors { flex: 1 1 0px; min-height: 0; width: 18px; overflow: hidden; border: 1px solid #555; border-width: 0 1px; }
.color { width: 16px; height: 17px; border-bottom: 1px solid #555; }
.empty { height: 18px; background: #474747; overflow: hidden; }
.empty .ico { margin: -4px; }
.cur { outline: 1px solid #fff; }

.status { position: relative; display: flex; align-items: center; height: 38px; border-top: 1px solid #d3d3d3; padding: 0 0 2px 7px; }
.msg { margin: 0 29px 0 5px; }
.fill { display: flex; align-items: center; gap: 2px; margin-left: auto; margin-right: 230px; }
.fill > .ico:first-child { margin-right: -2px; }
.box { width: 21px; height: 22px; border: 1px solid #a9a9a9; background: #fff; }
.box.brown { background: #231815; margin-right: 3px; }
.box svg { display: block; width: 19px; height: 20px; }
.cmyk { display: grid; grid-template-columns: 18px 14px 20px 16px 16px 16px 16px 26px; font-size: 12px; text-align: right; gap: 0; margin-right: 8px; }
.cmyk span:nth-child(odd) { text-align: left; padding-left: 1px; }
.cmyk span:nth-child(even) { padding-right: 3px; }
.ime { position: absolute; left: 1339px; top: -13px; height: 26px; width: 63px; background: #fff; border: 1px solid #888; border-radius: 6px; box-shadow: 0 2px 3px #0008; white-space: nowrap; color: #333; }
.ime svg { width: 11px; height: 13px; vertical-align: -2px; fill: none; stroke: #333; }
.mark { position: absolute; right: 12px; top: -12px; display: flex; align-items: center; }
.mark > svg:first-child { width: 44px; height: 44px; }
.mark div { display: flex; flex-direction: column; }
.mark strong { font-size: 21px; line-height: 26px; font-weight: 500; color: #5f97cf; }
.mark span { font: 700 16px/18px "Liberation Sans", sans-serif; color: #6fc487; }
.proof { position: absolute; right: -4px; top: 18px; }
.desk { display: flex; height: 5px; background: #20241f; }
.desk i { width: 160px; margin-left: 743px; background: #5c5750; }
</style>
